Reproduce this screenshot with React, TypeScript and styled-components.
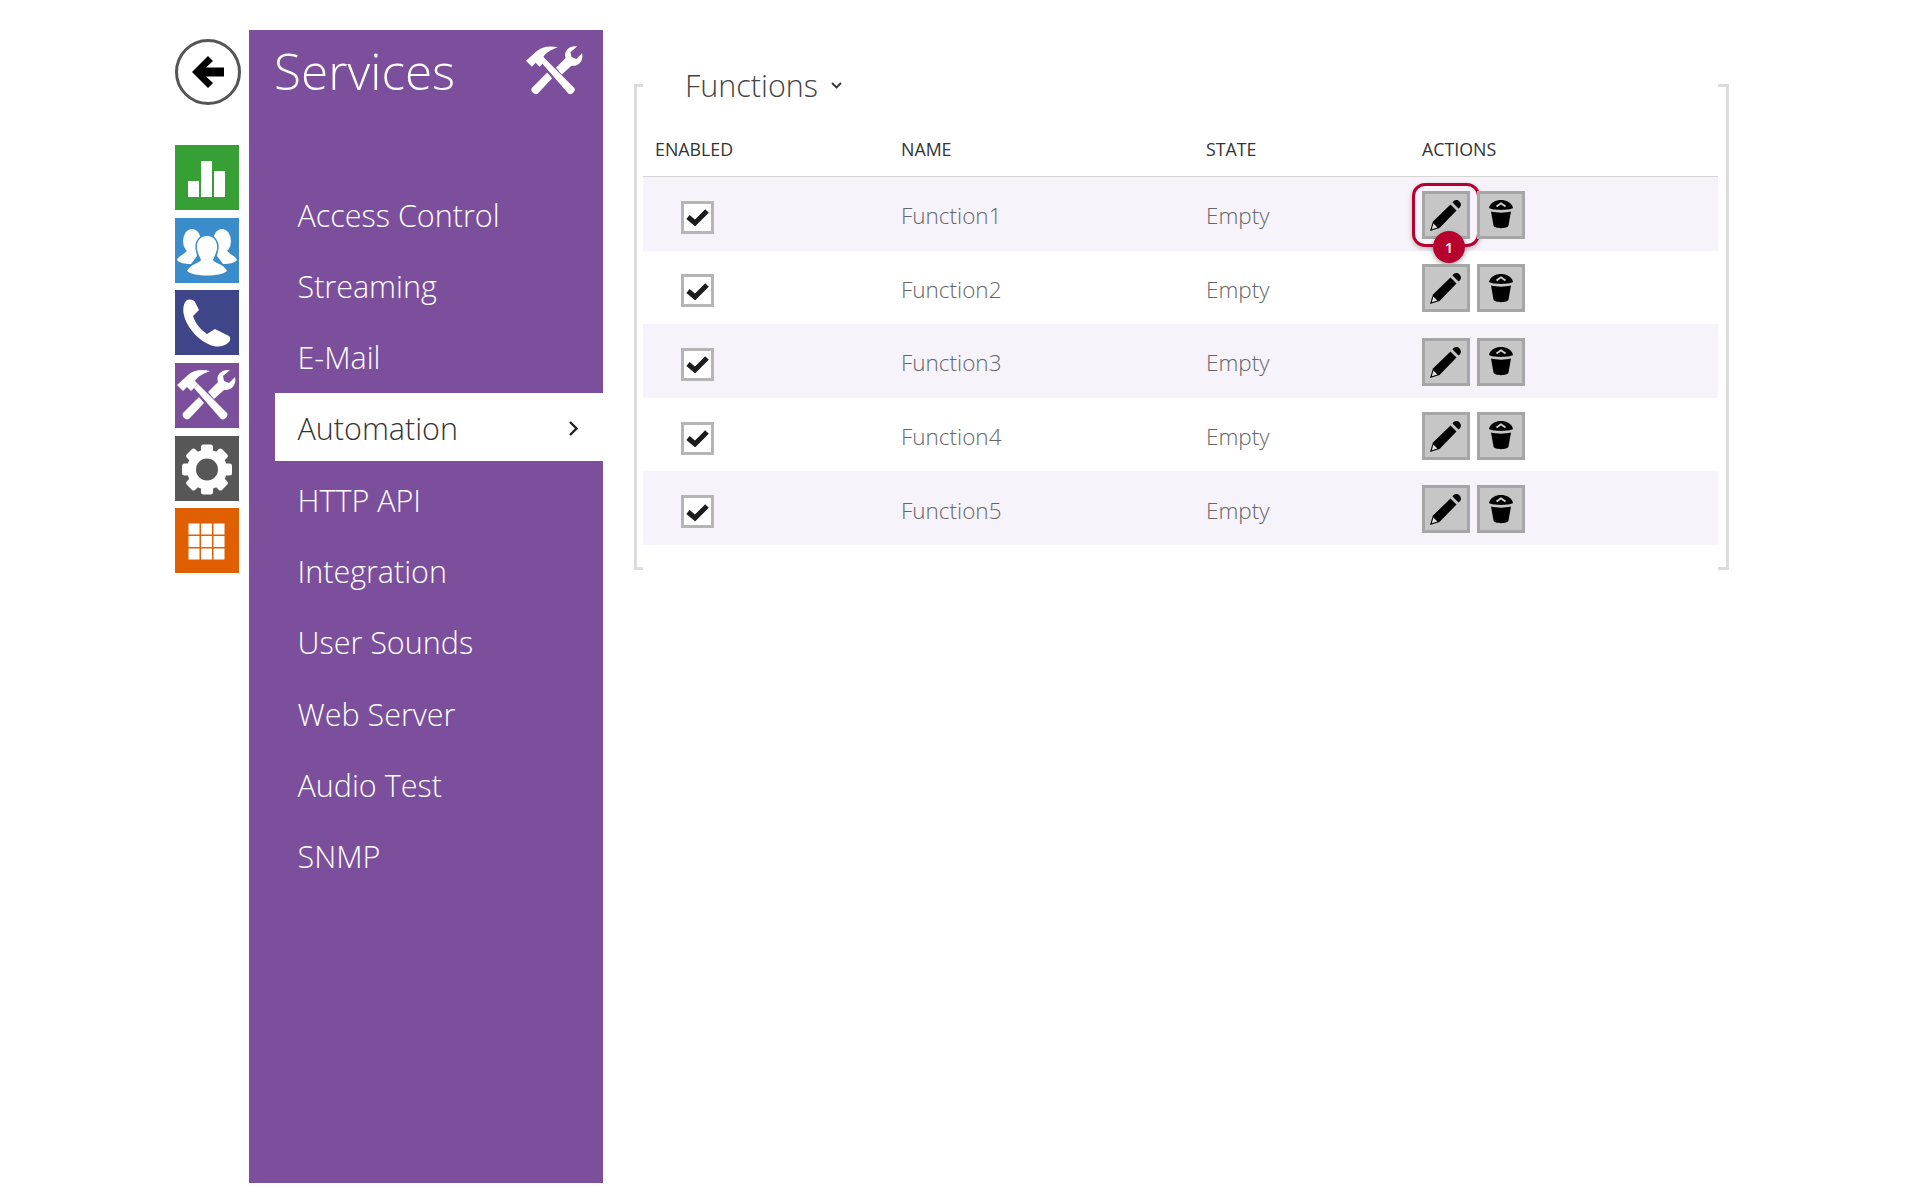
import styled, {createGlobalStyle} from 'styled-components'

const GlobalStyle = createGlobalStyle`
    html, body {
        margin: 0;
        background: #fff;
        font-family: "Open Sans", "Liberation Sans", sans-serif;
    }
`

const COLORS = {
    purple: '#7c4f9c',
    green: '#36a035',
    blue: '#3a8ccb',
    navy: '#3e4589',
    grey: '#575757',
    orange: '#e05f00',
    red: '#b8002f',
}

const COLUMNS = '246px 305px 216px 1fr'

const Page = styled.div`
    display: flex;
    align-items: flex-start;
    width: 1920px;
    height: 1200px;
    box-sizing: border-box;
    padding: 30px 0 0 175px;
`

const Rail = styled.div`
    display: flex;
    flex-direction: column;
    width: 64px;
    margin-right: 10px;
`

const BackButton = styled.div`
    display: flex;
    align-items: center;
    justify-content: center;
    box-sizing: border-box;
    width: 66px;
    height: 66px;
    margin: 9px 0 40px;
    border: 3px solid #555;
    border-radius: 50%;
    background: #fff;
`

const Tiles = styled.div`
    display: flex;
    flex-direction: column;
    gap: 7.7px;
`

const Tile = styled.div<{ $color: string }>`
    width: 64px;
    height: 65px;
    background: ${p => p.$color};
    svg {
        display: block;
    }
`

const Sidebar = styled.nav`
    width: 354px;
    height: 1153px;
    background: ${COLORS.purple};
`

const SidebarHead = styled.div`
    display: flex;
    align-items: center;
    justify-content: space-between;
    height: 82px;
    padding: 0 19px 0 25px;
`

const Title = styled.h1`
    margin: 0;
    color: #fff;
    font-size: 49.5px;
    font-weight: 300;
    line-height: 78px;
`

const MenuList = styled.ul`
    display: flex;
    flex-direction: column;
    gap: 3.3px;
    margin: 67px 0 0 26px;
    padding: 0;
    list-style: none;
`

const MenuItem = styled.li<{ $active?: boolean }>`
    display: flex;
    align-items: center;
    justify-content: space-between;
    box-sizing: border-box;
    height: 68px;
    padding: 3px 25px 0 22.5px;
    background: ${p => (p.$active ? '#fff' : 'transparent')};
    color: ${p => (p.$active ? '#333' : '#fff')};
    font-size: 30.5px;
    font-weight: 300;
`

const Panel = styled.section`
    display: flex;
    width: 1095px;
    height: 486px;
    margin: 54px 0 0 31px;
`

const Bracket = styled.div<{ $side: 'left' | 'right' }>`
    flex: none;
    box-sizing: border-box;
    width: ${p => (p.$side === 'left' ? 9 : 11)}px;
    border: 3px solid #dcdcdc;
    border-${p => (p.$side === 'left' ? 'right' : 'left')}: none;
`

const PanelBody = styled.div`
    flex: 1;
    min-width: 0;
    margin-top: -22px;
`

const Heading = styled.h2`
    display: flex;
    align-items: center;
    gap: 13px;
    height: 46px;
    margin: 0 0 2px;
    padding-left: 42px;
    color: #444;
    font-size: 30.5px;
    font-weight: 300;
`

const TableHead = styled.div`
    display: grid;
    grid-template-columns: ${COLUMNS};
    align-items: center;
    height: 54px;
    padding: 12px 0 0 12px;
    border-bottom: 1px solid #d4d4d4;
    color: #333;
    font-size: 17.8px;
`

const Row = styled.div`
    display: grid;
    grid-template-columns: ${COLUMNS};
    align-items: center;
    box-sizing: border-box;
    height: 73.6px;
    padding: 2px 0 0 12px;
    color: #666;
    font-size: 22.5px;
    font-weight: 300;
    &:nth-child(odd) {
        background: #f6f4fa;
    }
`

const RowText = styled.span`
    padding-top: 2px;
`

const Checkbox = styled.div`
    display: flex;
    align-items: center;
    justify-content: center;
    box-sizing: border-box;
    width: 33px;
    height: 33px;
    margin: 5px 0 0 26px;
    border: 3px solid #b5b5b5;
    background: #fff;
`

const Actions = styled.div`
    display: flex;
    gap: 7px;
`

const IconButton = styled.div`
    position: relative;
    display: flex;
    align-items: center;
    justify-content: center;
    box-sizing: border-box;
    width: 48px;
    height: 48px;
    border: 3px solid #a6a6a6;
    background: #c6c6c6;
`

const Highlight = styled.div`
    position: absolute;
    top: -11px;
    left: -13px;
    width: 68px;
    height: 64px;
    box-sizing: border-box;
    border: 3px solid ${COLORS.red};
    border-radius: 13px;
    box-shadow: 0 2px 5px rgba(0, 0, 0, .25);
`

const Badge = styled.div`
    position: absolute;
    top: 37px;
    left: 8px;
    display: flex;
    align-items: center;
    justify-content: center;
    width: 32px;
    height: 32px;
    border-radius: 50%;
    background: ${COLORS.red};
    box-shadow: 0 2px 5px rgba(0, 0, 0, .35);
    color: #fff;
    font-size: 15px;
    font-weight: 600;
`

function ToolsIcon({width, height}: { width: number, height: number }) {
    return (
        <svg width={width} height={height} viewBox="0 0 60 52" fill="#fff">
            <path d="M0 15 L6 21 L10 17 L14 21 L21 14 L18 11 C20 7 25 4 33 1 C25 -1 16 0 11 5 Z"/>
            <path d="M17 18 L21 14 L50 43 C52 46 47 51 44 49 Z"/>
            <path d="M31 22 L41 12 C39 6 43 0 51 0 L53 0 L46 6 L47 11 L52 13 L58 7 C60 15 54 21 47 20 L37 29 Z"/>
            <path d="M22 27 L27 33 L12 49 C9 51 4 46 6 43 Z"/>
        </svg>
    )
}

function ChartIcon() {
    return (
        <svg width="64" height="65" viewBox="0 0 64 65" fill="#fff">
            <rect x="13" y="36" width="11" height="16"/>
            <rect x="26" y="16" width="11" height="36"/>
            <rect x="39" y="26" width="11" height="26"/>
        </svg>
    )
}

function PeopleIcon() {
    return (
        <svg width="64" height="65" viewBox="0 0 64 65" fill="#fff">
            <ellipse cx="17" cy="23" rx="9" ry="12"/>
            <ellipse cx="47" cy="23" rx="9" ry="12"/>
            <path d="M13 31 L21 31 L22 38 L16 46 C10 46 4 45 2 42 C3 38 11 36 13 31 Z"/>
            <path d="M51 31 L43 31 L42 38 L48 46 C54 46 60 45 62 42 C61 38 53 36 51 31 Z"/>
            <path stroke={COLORS.blue} strokeWidth="3" paintOrder="stroke"
                  d="M32 18 C39 18 43 24 42 31 C41 36 39 39 38 42 C39 45 49 46 52 53 C46 59 18 59 12 53 C15 46 25 45 26 42 C25 39 23 36 22 31 C21 24 25 18 32 18 Z"/>
        </svg>
    )
}

function PhoneIcon() {
    return (
        <svg width="64" height="65" viewBox="0 0 64 65" fill="#fff">
            <path d="M12 10 C15 8.5 19 10 20 12 L24 20 L18 26 C20 33 26 40 32 44 L40 39 L54 46 C56 48 55 51 54 52 C50 56 45 57 41 56.5 C26 54 11 38 8.5 23 C8 18 8.5 13 12 10 Z"/>
        </svg>
    )
}

function GearIcon() {
    return (
        <svg width="64" height="65" viewBox="0 0 64 65" fill="#fff">
            {[0, 45, 90, 135, 180, 225, 270, 315].map(angle => (
                <rect key={angle} x="26" y="8.5" width="12" height="12" rx="2.5"
                      transform={`rotate(${angle} 32 33.5)`}/>
            ))}
            <circle cx="32" cy="33.5" r="20"/>
            <circle cx="32" cy="33.5" r="11" fill={COLORS.grey}/>
        </svg>
    )
}

function GridIcon() {
    const steps = [13.5, 26, 38.5]
    return (
        <svg width="64" height="65" viewBox="0 0 64 65" fill="#fff">
            {steps.map(y => steps.map(x => (
                <rect key={`${x}-${y}`} x={x} y={y + 2} width="11" height="11"/>
            )))}
        </svg>
    )
}

function PencilIcon() {
    return (
        <svg width="32" height="32" viewBox="0 0 32 32" fill="#000">
            <path d="M0 32 L3 22.5 L20.5 5.5 L26.5 11.5 L9.5 29 Z"/>
            <path d="M22.5 3.5 C24.5 .5 27.5 .5 29.5 2.5 C31.5 4.5 31.5 7.5 28.5 9.5 Z"/>
            <path d="M1.8 30.2 L3.4 24.6 L7.4 28.6 Z" fill="#e0e0e0"/>
        </svg>
    )
}

function TrashIcon() {
    return (
        <svg width="24" height="29" viewBox="0 0 24 29" fill="#000">
            <path d="M0 8 C1 2.5 7 0 12 0 C17 0 23 2.5 24 8 C20 10.5 4 10.5 0 8 Z"/>
            <path d="M7.5 6.5 L12 3.2 L16.5 6.5" fill="none" stroke="#d6d6d6" strokeWidth="1.7"/>
            <path d="M2 11.5 C8 13 16 13 22 11.5 L19.5 25.5 C19 29 5 29 4.5 25.5 Z"/>
        </svg>
    )
}

const MENU = ['Access Control', 'Streaming', 'E-Mail', 'Automation', 'HTTP API', 'Integration', 'User Sounds', 'Web Server', 'Audio Test', 'SNMP']
const FUNCTIONS = ['Function1', 'Function2', 'Function3', 'Function4', 'Function5']

export default function App() {
    return (
        <Page>
            <GlobalStyle/>
            <Rail>
                <BackButton>
                    <svg width="32" height="32" viewBox="0 0 32 32" fill="#000">
                        <path d="M0 16 L16 0 L21 5 L14 11.5 L32 11.5 L32 20.5 L14 20.5 L21 27 L16 32 Z"/>
                    </svg>
                </BackButton>
                <Tiles>
                    <Tile $color={COLORS.green}><ChartIcon/></Tile>
                    <Tile $color={COLORS.blue}><PeopleIcon/></Tile>
                    <Tile $color={COLORS.navy}><PhoneIcon/></Tile>
                    <Tile $color={COLORS.purple}>
                        <svg width="64" height="65" viewBox="-2 -7 64 65"><ToolsIcon width={60} height={52}/></svg>
                    </Tile>
                    <Tile $color={COLORS.grey}><GearIcon/></Tile>
                    <Tile $color={COLORS.orange}><GridIcon/></Tile>
                </Tiles>
            </Rail>
            <Sidebar>
                <SidebarHead>
                    <Title>Services</Title>
                    <ToolsIcon width={58} height={51}/>
                </SidebarHead>
                <MenuList>
                    {MENU.map(item => (
                        <MenuItem key={item} $active={item === 'Automation'}>
                            {item}
                            {item === 'Automation' && (
                                <svg width="9" height="15" viewBox="0 0 9 15" fill="none" stroke="#222" strokeWidth="2.4">
                                    <path d="M1 1 L7.5 7.5 L1 14"/>
                                </svg>
                            )}
                        </MenuItem>
                    ))}
                </MenuList>
            </Sidebar>
            <Panel>
                <Bracket $side="left"/>
                <PanelBody>
                    <Heading>
                        Functions
                        <svg width="11" height="7" viewBox="0 0 11 7" fill="none" stroke="#333" strokeWidth="1.8">
                            <path d="M1 1 L5.5 5.5 L10 1"/>
                        </svg>
                    </Heading>
                    <TableHead>
                        <span>ENABLED</span>
                        <span>NAME</span>
                        <span>STATE</span>
                        <span>ACTIONS</span>
                    </TableHead>
                    <div>
                        {FUNCTIONS.map((name, i) => (
                            <Row key={name}>
                                <Checkbox>
                                    <svg width="23" height="18" viewBox="0 0 23 18" fill="none" stroke="#1c1c1c" strokeWidth="5">
                                        <path d="M2 9 L9 15 L21 3"/>
                                    </svg>
                                </Checkbox>
                                <RowText>{name}</RowText>
                                <RowText>Empty</RowText>
                                <Actions>
                                    <IconButton>
                                        <PencilIcon/>
                                        {i === 0 && <Highlight/>}
                                        {i === 0 && <Badge>1</Badge>}
                                    </IconButton>
                                    <IconButton><TrashIcon/></IconButton>
                                </Actions>
                            </Row>
                        ))}
                    </div>
                </PanelBody>
                <Bracket $side="right"/>
            </Panel>
        </Page>
    )
}
